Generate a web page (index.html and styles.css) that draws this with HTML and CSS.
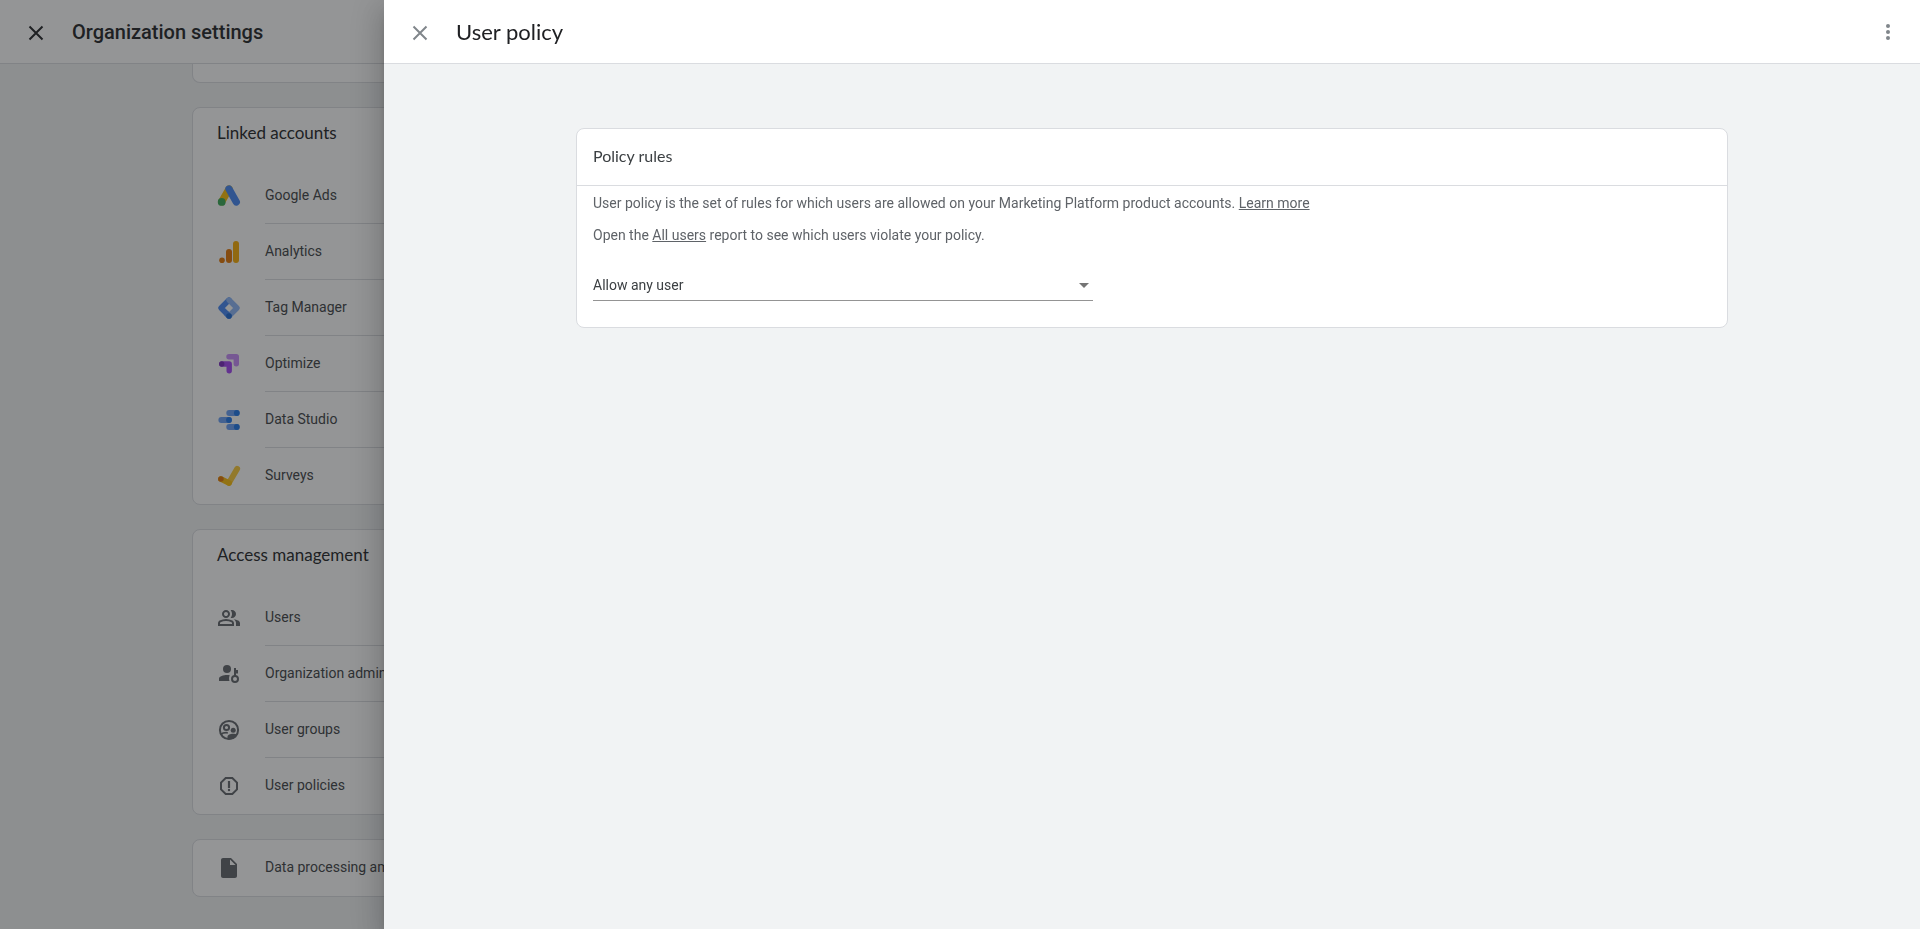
FILE: index.html
```html
<!DOCTYPE html>
<html lang="en">
<head>
<meta charset="utf-8">
<title>User policy</title>
<link rel="stylesheet" href="styles.css">
</head>
<body>
<div class="page">
  <header class="bar">
    <button class="icon-button" type="button" aria-label="Close settings">
      <svg class="icon" viewBox="0 0 24 24"><path d="M5.500 6.500l13 13M18.500 6.500l-13 13" fill="none" stroke="currentColor" stroke-width="2"/></svg>
    </button>
    <h1 class="bar-title bar-title-strong">Organization settings</h1>
  </header>
  <main class="settings">
    <section class="card card-cut"></section>
    <section class="card">
      <h2 class="card-title">Linked accounts</h2>
      <ul class="list">
        <li class="item">
          <svg class="icon" viewBox="0 0 24 24"><path d="M12 5L4.700 17.700" stroke="#fbbc04" stroke-width="7.300" stroke-linecap="round"/><path d="M12 5l7.300 13" stroke="#4285f4" stroke-width="7.300" stroke-linecap="round"/><circle cx="4.700" cy="17.900" r="3.900" fill="#34a853"/></svg>
          <span class="label">Google Ads</span>
        </li>
        <li class="item">
          <svg class="icon" viewBox="0 0 24 24"><rect x="16" y="1" width="6" height="22" rx="3" fill="#f9ab00"/><rect x="9" y="9" width="6" height="14" rx="3" fill="#e37400"/><circle cx="5" cy="20.200" r="2.800" fill="#e37400"/></svg>
          <span class="label">Analytics</span>
        </li>
        <li class="item">
          <svg class="icon" viewBox="0 0 24 24"><g fill="none" stroke-width="5.400" stroke-linejoin="round" stroke-linecap="round"><path d="M12 20L4 12l8-8" stroke="#4285f4"/><path d="M12 4l8 8-8 8" stroke="#8ab4f8"/><path d="M9.500 17.500L12 20" stroke="#4285f4"/></g><circle cx="12" cy="20" r="2.800" fill="#1967d2"/></svg>
          <span class="label">Tag Manager</span>
        </li>
        <li class="item">
          <svg class="icon" viewBox="0 0 24 24"><g fill="none" stroke-width="5.400" stroke-linecap="round" stroke-linejoin="round"><path d="M12 4.700h7.300v7" stroke="#c58af9"/><path d="M5 12h7.200v6.800" stroke="#a142f4"/></g><circle cx="4.700" cy="12" r="2.700" fill="#7627bb"/></svg>
          <span class="label">Optimize</span>
        </li>
        <li class="item">
          <svg class="icon" viewBox="0 0 24 24"><path d="M12.200 5h7.500M4.300 12H12M12.200 19h7.500" stroke="#669df6" stroke-width="5.800" stroke-linecap="round"/><g fill="#1a73e8"><circle cx="19.800" cy="5" r="2.900"/><circle cx="12" cy="12" r="2.900"/><circle cx="19.800" cy="19" r="2.900"/></g></svg>
          <span class="label">Data Studio</span>
        </li>
        <li class="item">
          <svg class="icon" viewBox="0 0 24 24"><g fill="none" stroke-width="5.800" stroke-linecap="round"><path d="M12 18.900L20.200 4.800" stroke="#fcc934"/><path d="M4 15l8 4" stroke="#fbbc04"/></g><circle cx="3.900" cy="15" r="2.800" fill="#e37400"/></svg>
          <span class="label">Surveys</span>
        </li>
      </ul>
    </section>
    <section class="card">
      <h2 class="card-title">Access management</h2>
      <ul class="list">
        <li class="item">
          <svg class="icon" viewBox="0 -960 960 960"><path fill="currentColor" d="M40-160v-112q0-34 17.500-62.500T104-378q62-31 126-46.500T360-440q66 0 130 15.500T616-378q29 15 46.500 43.500T680-272v112H40Zm720 0v-120q0-44-24.500-84.500T666-434q51 6 96 20.500t84 35.500q36 20 55 44.500t19 53.500v120H760ZM360-480q-66 0-113-47t-47-113q0-66 47-113t113-47q66 0 113 47t47 113q0 66-47 113t-113 47Zm400-160q0 66-47 113t-113 47q-11 0-28-2.500t-28-5.500q27-32 41.500-71t14.500-81q0-42-14.500-81T544-792q14-5 28-6.500t28-1.500q66 0 113 47t47 113ZM120-240h480v-32q0-11-5.500-20T580-306q-54-27-109-40.500T360-360q-56 0-111 13.500T140-306q-9 5-14.500 14t-5.500 20v32Zm240-320q33 0 56.500-23.500T440-640q0-33-23.500-56.500T360-720q-33 0-56.500 23.500T280-640q0 33 23.500 56.500T360-560Z"/></svg>
          <span class="label">Users</span>
        </li>
        <li class="item">
          <svg class="icon" viewBox="0 0 24 24"><g fill="currentColor"><circle cx="10" cy="7" r="4"/><path d="M2 19v-2.500c0-2.300 4.600-3.500 8-3.500 1 0 1.900.1 2.800.3-.9 1.700-1 3.800-.3 5.700z"/><path d="M17 14V6h2v2h2v3.500h-2V14z"/></g><circle cx="18" cy="17" r="3" fill="none" stroke="currentColor" stroke-width="2"/></svg>
          <span class="label">Organization admins</span>
        </li>
        <li class="item">
          <svg class="icon" viewBox="0 0 24 24"><g fill="none" stroke="currentColor" stroke-width="2"><circle cx="12" cy="12" r="9.100"/><circle cx="9.500" cy="9.500" r="2.600"/><path d="M4 16.200c1.500-1.200 4-1.700 6.800-1.400" stroke-width="1.800"/></g><g fill="currentColor"><circle cx="16.200" cy="12.300" r="2.500"/><path d="M10.500 21.500v-2.600c0-2.200 2.800-3.100 5.500-3.100 1.500 0 3 .3 4 .9-1.700 3.200-5 5.300-9.500 4.800z"/></g></svg>
          <span class="label">User groups</span>
        </li>
        <li class="item">
          <svg class="icon" viewBox="0 0 24 24"><g fill="currentColor"><path d="M15.730 3H8.270L3 8.270v7.460L8.270 21h7.460L21 15.730V8.270zM19 14.900L14.900 19H9.100L5 14.900V9.100L9.100 5h5.800L19 9.100z"/><circle cx="12" cy="16" r="1.200"/><path d="M10.900 7h2.200v7h-2.200z"/></g></svg>
          <span class="label">User policies</span>
        </li>
      </ul>
    </section>
    <section class="card">
      <ul class="list">
        <li class="item">
          <svg class="icon" viewBox="0 0 24 24"><path fill="currentColor" d="M6 2c-1.100 0-2 .9-2 2v16c0 1.100.9 2 2 2h12c1.100 0 2-.9 2-2V8l-6-6zm7 7V3.500L18.500 9z"/></svg>
          <span class="label">Data processing amendment</span>
        </li>
      </ul>
    </section>
  </main>
</div>
<div class="scrim"></div>
<div class="drawer" role="dialog" aria-labelledby="drawer-title">
  <header class="bar">
    <button class="icon-button icon-button-muted" type="button" aria-label="Close">
      <svg class="icon" viewBox="0 0 24 24"><path d="M5.500 6.500l13 13M18.500 6.500l-13 13" fill="none" stroke="currentColor" stroke-width="2"/></svg>
    </button>
    <h1 class="bar-title" id="drawer-title">User policy</h1>
    <button class="icon-button icon-button-muted icon-button-end" type="button" aria-label="More options">
      <svg class="icon" viewBox="0 0 24 24"><g fill="currentColor"><circle cx="12" cy="6" r="2"/><circle cx="12" cy="12" r="2"/><circle cx="12" cy="18" r="2"/></g></svg>
    </button>
  </header>
  <main class="drawer-body">
    <section class="card policy">
      <h2 class="policy-title" id="rules-title">Policy rules</h2>
      <div class="policy-body">
        <p class="text">User policy is the set of rules for which users are allowed on your Marketing Platform product accounts. <a class="link" href="#">Learn more</a></p>
        <p class="text">Open the <a class="link" href="#">All users</a> report to see which users violate your policy.</p>
        <div class="field">
          <select class="select" aria-labelledby="rules-title">
            <option>Allow any user</option>
          </select>
          <svg class="caret" viewBox="0 0 10 5"><path d="M0 0h10L5 5z" fill="currentColor"/></svg>
        </div>
      </div>
    </section>
  </main>
</div>
</body>
</html>
```
FILE: styles.css
```css
* {
  box-sizing: border-box;
}

body {
  margin: 0;
  background: #f1f3f4;
  color: #3c4043;
  font: 14px/20px Roboto, "Liberation Sans", sans-serif;
}

.page {
  height: 100vh;
  overflow: hidden;
}

.bar {
  display: flex;
  align-items: center;
  height: 64px;
  padding: 0 20px 0 24px;
  background: #fff;
  border-bottom: 1px solid #dadce0;
}

.bar-title {
  margin: 0 0 0 24px;
  color: #202124;
  font: 400 22px/28px Lato, sans-serif;
}

.bar-title-strong {
  font: 500 20px/28px Roboto, sans-serif;
}

.icon-button {
  display: flex;
  padding: 0;
  border: 0;
  background: none;
  color: #202124;
  cursor: pointer;
}

.icon-button-muted {
  color: #80868b;
}

.icon-button-end {
  margin-left: auto;
}

.icon {
  display: block;
  flex: none;
  width: 24px;
  height: 24px;
}

.settings {
  display: flex;
  flex-direction: column;
  gap: 24px;
  padding: 0 10% 24px;
}

.card {
  background: #fff;
  border: 1px solid #dadce0;
  border-radius: 8px;
}

.card-cut {
  height: 19px;
  border-top: 0;
  border-radius: 0 0 8px 8px;
}

.card-title {
  margin: 0;
  padding: 13px 24px 23px;
  color: #202124;
  font: 400 17px/24px Lato, sans-serif;
}

.list {
  margin: 0;
  padding: 0 0 0 24px;
  list-style: none;
}

.item {
  display: flex;
  align-items: center;
  gap: 24px;
  height: 56px;
  color: #5f6368;
}

.label {
  flex: 1;
  padding: 17px 0 18px;
  border-bottom: 1px solid #dadce0;
  color: #3c4043;
}

.item:last-child .label {
  border-bottom-color: transparent;
}

.scrim {
  position: fixed;
  inset: 0;
  background: rgba(32, 33, 36, 0.48);
}

.drawer {
  position: fixed;
  inset: 0 0 0 20%;
  background: #f1f3f4;
  box-shadow: 0 8px 10px -5px rgba(0, 0, 0, 0.2), 0 16px 24px 2px rgba(0, 0, 0, 0.14), 0 6px 30px 5px rgba(0, 0, 0, 0.12);
}

.drawer-body {
  padding: 64px 12.5%;
}

.policy-title {
  margin: 0;
  padding: 15px 16px 17px;
  border-bottom: 1px solid #dadce0;
  color: #3c4043;
  font: 400 16px/24px Lato, sans-serif;
}

.policy-body {
  padding: 7px 16px 26px;
}

.text {
  margin: 0 0 12px;
  color: #5f6368;
}

.link {
  color: inherit;
}

.field {
  display: flex;
  align-items: center;
  position: relative;
  max-width: 500px;
  margin-top: 24px;
}

.select {
  width: 100%;
  height: 32px;
  padding: 0;
  border: 0;
  border-bottom: 1px solid #949494;
  border-radius: 0;
  background: none;
  color: #3c4043;
  font: inherit;
  appearance: none;
}

.caret {
  position: absolute;
  right: 4px;
  width: 10px;
  height: 5px;
  color: #757575;
  pointer-events: none;
}
```
